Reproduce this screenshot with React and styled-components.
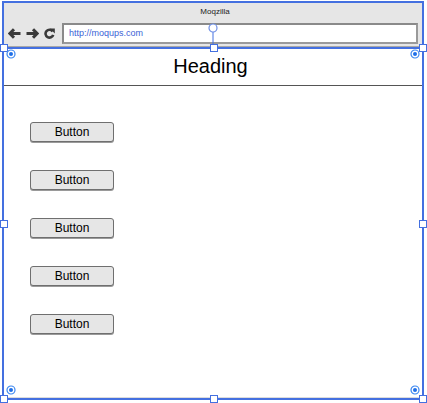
import React from 'react'
import styled, { createGlobalStyle } from 'styled-components'

const BLUE = '#4470e0'

const GlobalStyle = createGlobalStyle`
  body {
    margin: 0;
    background: #fff;
    font-family: "Liberation Sans", Arial, sans-serif;
  }
`

const Canvas = styled.div`
  position: relative;
  width: 427px;
  height: 403px;
  overflow: hidden;
`

const Window = styled.div`
  box-sizing: border-box;
  margin: 1px 0 0 2px;
  width: 422px;
  height: 399px;
  border: 2px solid ${BLUE};
  display: flex;
  flex-direction: column;
`

const Chrome = styled.div`
  height: 43px;
  background: #e6e6e6;
  border-bottom: 1px solid #a8a8a8;
  display: flex;
  flex-direction: column;
`

const Title = styled.div`
  height: 17px;
  line-height: 17px;
  font-size: 8px;
  color: #222;
  text-align: center;
  padding-left: 4px;
`

const NavRow = styled.div`
  margin-top: 3px;
  height: 21px;
  display: flex;
  align-items: center;
  padding-left: 4px;
`

const NavIcon = styled.svg`
  flex: none;
  margin-right: ${props => props.gap}px;
`

const Address = styled.div`
  box-sizing: border-box;
  width: 356px;
  height: 21px;
  background: #fff;
  border: 2px solid #8a8a8a;
  border-right-color: #9a9a9a;
  border-bottom-color: #9a9a9a;
  font-size: 9px;
  line-height: 17px;
  color: #3b5fd6;
  padding-left: 5px;
`

const Selected = styled.div`
  flex: 1;
  border-top: 2px solid ${BLUE};
  display: flex;
  flex-direction: column;
`

const HeadingBar = styled.div`
  box-sizing: border-box;
  height: 37px;
  border-bottom: 1px solid #555;
  padding: 6px 5px 0 0;
  text-align: center;
  font-size: 20px;
  line-height: 22px;
  color: #000;
`

const Body = styled.div`
  flex: 1;
  border-bottom: 1px solid #dcdcdc;
  padding: 36px 0 0 26px;
  display: flex;
  flex-direction: column;
  align-items: flex-start;
  gap: 28px;
`

const Button = styled.div`
  box-sizing: border-box;
  width: 84px;
  height: 20px;
  border: 1px solid #6f6f6f;
  border-radius: 3px;
  background: #e6e6e6;
  box-shadow: 0 1px 0 #9a9a9a;
  font-size: 12px;
  line-height: 18px;
  text-align: center;
  color: #000;
`

/* selection handles sit over the frame edges */
const HandleGrid = styled.div`
  position: absolute;
  left: 0;
  top: 44px;
  width: 427px;
  height: 359px;
  display: grid;
  grid-template-columns: repeat(3, 8px);
  grid-template-rows: repeat(3, 8px);
  justify-content: space-between;
  align-content: space-between;
  pointer-events: none;
`

const Handle = styled.div`
  box-sizing: border-box;
  width: 8px;
  height: 8px;
  background: #fff;
  border: 1px solid ${BLUE};
`

const EmptyCell = styled.div``

const CornerGrid = styled.div`
  position: absolute;
  left: 6px;
  top: 49px;
  width: 414px;
  height: 346px;
  display: grid;
  grid-template-columns: repeat(2, 10px);
  grid-template-rows: repeat(2, 10px);
  justify-content: space-between;
  align-content: space-between;
  pointer-events: none;
`

const Rotator = styled.svg`
  position: absolute;
  left: 208px;
  top: 23px;
`

const BackIcon = () => (
  <NavIcon width='13' height='11' viewBox='0 0 13 11' gap={5}>
    <path d='M6 1.2 L1.9 5.5 L6 9.8 M1.9 5.5 H12.5' fill='none' stroke='#3a3a3a' strokeWidth='3' />
  </NavIcon>
)

const ForwardIcon = () => (
  <NavIcon width='13' height='11' viewBox='0 0 13 11' gap={5}>
    <path d='M7 1.2 L11.1 5.5 L7 9.8 M11.1 5.5 H0.5' fill='none' stroke='#3a3a3a' strokeWidth='3' />
  </NavIcon>
)

const ReloadIcon = () => (
  <NavIcon width='11' height='11' viewBox='0 0 11 11' gap={7}>
    <path d='M8.6 3.4 A3.9 3.9 0 1 0 9.2 6.8' fill='none' stroke='#3a3a3a' strokeWidth='2.6' />
    <path d='M5.8 0.4 L10.8 0.4 L10.8 5.4 Z' fill='#3a3a3a' />
  </NavIcon>
)

const CornerMark = () => (
  <svg width='10' height='10' viewBox='0 0 10 10'>
    <circle cx='5' cy='5' r='4' fill='#fff' stroke='#3a86f0' strokeWidth='1.2' />
    <circle cx='5' cy='5' r='2' fill='#1f6fe8' />
  </svg>
)

const buttons = ['Button', 'Button', 'Button', 'Button', 'Button']
const handles = [1, 1, 1, 1, 0, 1, 1, 1, 1]

export default function App () {
  return (
    <Canvas>
      <GlobalStyle />
      <Window>
        <Chrome>
          <Title>Moqzilla</Title>
          <NavRow>
            <BackIcon />
            <ForwardIcon />
            <ReloadIcon />
            <Address>http://moqups.com</Address>
          </NavRow>
        </Chrome>
        <Selected>
          <HeadingBar>Heading</HeadingBar>
          <Body>
            {buttons.map((label, i) => <Button key={i}>{label}</Button>)}
          </Body>
        </Selected>
      </Window>

      <Rotator width='10' height='22' viewBox='0 0 10 22'>
        <line x1='5' y1='9' x2='5' y2='21' stroke={BLUE} strokeWidth='1' />
        <circle cx='5' cy='5' r='4' fill='#fff' stroke='#6f8fe6' strokeWidth='1.2' />
      </Rotator>

      <HandleGrid>
        {handles.map((on, i) => on ? <Handle key={i} /> : <EmptyCell key={i} />)}
      </HandleGrid>

      <CornerGrid>
        <CornerMark />
        <CornerMark />
        <CornerMark />
        <CornerMark />
      </CornerGrid>
    </Canvas>
  )
}
